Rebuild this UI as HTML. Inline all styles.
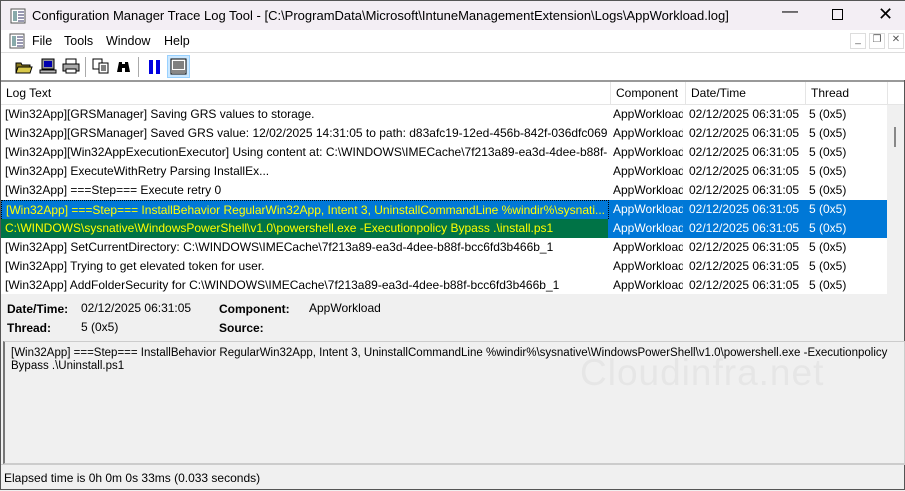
<!DOCTYPE html><html><head><style>
*{margin:0;padding:0;box-sizing:border-box}
body{width:905px;height:490px;overflow:hidden;background:#f0f0f0;font-family:"Liberation Sans",sans-serif;font-size:12px;color:#000;position:relative;border:1px solid #555}
.abs{position:absolute}
.title{left:0;top:0;width:905px;height:29px;background:#f3eef4;font-size:13px}
.menu{left:0;top:29px;width:905px;height:22px;background:#fff;font-size:12.5px}
.tb{left:0;top:51px;width:905px;height:28px;background:#fff;border-top:1px solid #ddd}
.list{left:0;top:79px;width:903px;height:214px;background:#fff;border-top:2px solid #999}
.hdr{height:23px;border-bottom:1px solid #e5e5e5;position:relative}
.hdr div{position:absolute;height:22px;border-right:1px solid #e5e5e5;padding-left:5px;top:0;line-height:22px}
.row{height:19px;line-height:19px;position:relative;white-space:nowrap}
.row span{position:absolute;top:0;overflow:hidden}
.c1{left:4px;width:602px}.c2{left:612px;width:70px}.c3{left:688px;width:115px}.c4{left:808px}
.sel{background:#0078d7;color:#fff}
.b{font-weight:bold}
</style></head><body>
<div class="abs title">
<svg class="abs" style="left:9px;top:7px" width="16" height="16"><rect x="1" y="1" width="14" height="14" fill="#fff" stroke="#555"/><rect x="3" y="3" width="4" height="10" fill="#8aa"/><path d="M8 4h6M8 7h6M8 10h6M8 13h6" stroke="#336"/></svg>
<div class="abs" style="left:31px;top:7px">Configuration Manager Trace Log Tool - [C:\ProgramData\Microsoft\IntuneManagementExtension\Logs\AppWorkload.log]</div>
<div class="abs" style="left:781px;top:2px;font-size:16px">—</div>
<div class="abs" style="left:831px;top:8px;width:11px;height:11px;border:1px solid #000"></div>
<div class="abs" style="left:877px;top:3px;font-size:18px">✕</div>
</div>
<div class="abs menu">
<svg class="abs" style="left:8px;top:3px" width="16" height="16"><rect x="1" y="1" width="14" height="14" fill="#fff" stroke="#555"/><rect x="3" y="3" width="4" height="10" fill="#8aa"/><path d="M8 4h6M8 7h6M8 10h6M8 13h6" stroke="#336"/></svg>
<div class="abs" style="left:31px;top:4px">File</div><div class="abs" style="left:63px;top:4px">Tools</div><div class="abs" style="left:105px;top:4px">Window</div><div class="abs" style="left:163px;top:4px">Help</div>
<div class="abs" style="left:849px;top:3px;width:16px;height:16px;border:1px solid #ddd;font-size:10px;text-align:center;color:#555">_</div>
<div class="abs" style="left:868px;top:3px;width:16px;height:16px;border:1px solid #ddd;font-size:10px;text-align:center;color:#555">❐</div>
<div class="abs" style="left:887px;top:3px;width:16px;height:16px;border:1px solid #ddd;font-size:10px;text-align:center;color:#555">✕</div>
</div>
<div class="abs tb">
<svg class="abs" style="left:14px;top:5px" width="18" height="16"><path d="M1 5h5l1 2h8v8H1z" fill="#8a7a20" stroke="#000"/><path d="M3 9h14l-2 6H1z" fill="#d8c84a" stroke="#000"/></svg>
<svg class="abs" style="left:38px;top:5px" width="18" height="16"><rect x="3" y="1" width="12" height="10" fill="#999" stroke="#000"/><rect x="5" y="3" width="8" height="6" fill="#0000b0"/><rect x="1" y="12" width="16" height="3" fill="#bbb" stroke="#000"/></svg>
<svg class="abs" style="left:61px;top:5px" width="18" height="16"><rect x="4" y="1" width="10" height="5" fill="#fff" stroke="#000"/><rect x="1" y="6" width="16" height="7" fill="#aaa" stroke="#000"/><rect x="4" y="11" width="10" height="4" fill="#fff" stroke="#000"/></svg>
<div class="abs" style="left:84px;top:4px;width:1px;height:20px;background:#aaa"></div>
<svg class="abs" style="left:91px;top:5px" width="18" height="16"><rect x="1" y="1" width="9" height="10" fill="#fff" stroke="#000"/><rect x="7" y="5" width="9" height="10" fill="#fff" stroke="#000"/><path d="M9 8h5M9 10h5M9 12h5" stroke="#000"/></svg>
<svg class="abs" style="left:114px;top:5px" width="18" height="16"><path d="M2 14l2-10h3v10zM10 14V4h3l2 10z" fill="#000"/><rect x="6" y="6" width="5" height="4" fill="#000"/></svg>
<div class="abs" style="left:137px;top:4px;width:1px;height:20px;background:#aaa"></div>
<div class="abs" style="left:148px;top:7px;width:4px;height:14px;background:#0000e0"></div><div class="abs" style="left:155px;top:7px;width:4px;height:14px;background:#0000e0"></div>
<div class="abs" style="left:166px;top:2px;width:23px;height:23px;background:#cce8ff;border:1px solid #99d1ff"></div>
<svg class="abs" style="left:169px;top:5px" width="17" height="17"><rect x="1" y="1" width="15" height="15" fill="#fff" stroke="#000"/><path d="M3 4h11M3 6h11M3 8h11M3 10h11" stroke="#000"/><rect x="2" y="12" width="13" height="3" fill="#888"/></svg>
</div>
<div class="abs list">
<div class="hdr"><div style="left:0;width:610px">Log Text</div><div style="left:610px;width:75px">Component</div><div style="left:685px;width:120px">Date/Time</div><div style="left:805px;width:82px">Thread</div></div>
<div class="row"><span class="c1">[Win32App][GRSManager] Saving GRS values to storage.</span><span class="c2">AppWorkload</span><span class="c3">02/12/2025 06:31:05</span><span class="c4">5 (0x5)</span></div>
<div class="row"><span class="c1">[Win32App][GRSManager] Saved GRS value: 12/02/2025 14:31:05 to path: d83afc19-12ed-456b-842f-036dfc06924...</span><span class="c2">AppWorkload</span><span class="c3">02/12/2025 06:31:05</span><span class="c4">5 (0x5)</span></div>
<div class="row"><span class="c1">[Win32App][Win32AppExecutionExecutor] Using content at: C:\WINDOWS\IMECache\7f213a89-ea3d-4dee-b88f-...</span><span class="c2">AppWorkload</span><span class="c3">02/12/2025 06:31:05</span><span class="c4">5 (0x5)</span></div>
<div class="row"><span class="c1">[Win32App] ExecuteWithRetry Parsing InstallEx...</span><span class="c2">AppWorkload</span><span class="c3">02/12/2025 06:31:05</span><span class="c4">5 (0x5)</span></div>
<div class="row"><span class="c1">[Win32App] ===Step=== Execute retry 0</span><span class="c2">AppWorkload</span><span class="c3">02/12/2025 06:31:05</span><span class="c4">5 (0x5)</span></div>
<div class="row sel"><span class="c1" style="left:0;width:608px;padding-left:4px;background:#0078d7;color:#ff0;border:1px dotted #000">[Win32App] ===Step=== InstallBehavior RegularWin32App, Intent 3, UninstallCommandLine %windir%\sysnati...</span><span class="c2">AppWorkload</span><span class="c3">02/12/2025 06:31:05</span><span class="c4">5 (0x5)</span></div>
<div class="row sel"><span class="c1" style="left:0;width:607px;padding-left:4px;background:#007346;color:#ff0">C:\WINDOWS\sysnative\WindowsPowerShell\v1.0\powershell.exe -Executionpolicy Bypass .\install.ps1</span><span class="c2">AppWorkload</span><span class="c3">02/12/2025 06:31:05</span><span class="c4">5 (0x5)</span></div>
<div class="row"><span class="c1">[Win32App] SetCurrentDirectory: C:\WINDOWS\IMECache\7f213a89-ea3d-4dee-b88f-bcc6fd3b466b_1</span><span class="c2">AppWorkload</span><span class="c3">02/12/2025 06:31:05</span><span class="c4">5 (0x5)</span></div>
<div class="row"><span class="c1">[Win32App] Trying to get elevated token for user.</span><span class="c2">AppWorkload</span><span class="c3">02/12/2025 06:31:05</span><span class="c4">5 (0x5)</span></div>
<div class="row"><span class="c1">[Win32App] AddFolderSecurity for C:\WINDOWS\IMECache\7f213a89-ea3d-4dee-b88f-bcc6fd3b466b_1</span><span class="c2">AppWorkload</span><span class="c3">02/12/2025 06:31:05</span><span class="c4">5 (0x5)</span></div>
<div class="abs" style="left:886px;top:23px;width:17px;height:190px;background:#f0f0f0"></div>
<div class="abs" style="left:893px;top:45px;width:2px;height:20px;background:#888"></div>
</div>
<div class="abs b" style="left:6px;top:301px">Date/Time:</div><div class="abs" style="left:80px;top:300px">02/12/2025 06:31:05</div>
<div class="abs b" style="left:218px;top:301px">Component:</div><div class="abs" style="left:308px;top:300px">AppWorkload</div>
<div class="abs b" style="left:6px;top:320px">Thread:</div><div class="abs" style="left:80px;top:319px">5 (0x5)</div>
<div class="abs b" style="left:218px;top:320px">Source:</div>
<div class="abs" style="left:2px;top:340px;width:902px;height:123px;background:#f0f0f0;border:1px solid #ccc;border-left:2px solid #777;padding:5px 6px;font-size:11.5px;line-height:13px">[Win32App] ===Step=== InstallBehavior RegularWin32App, Intent 3, UninstallCommandLine %windir%\sysnative\WindowsPowerShell\v1.0\powershell.exe -Executionpolicy Bypass .\Uninstall.ps1
<div class="abs" style="left:575px;top:24px;font-size:37px;color:#e6e6e6;letter-spacing:1px">Cloudinfra.net</div></div>
<div class="abs" style="left:0;top:463px;width:905px;height:27px;border-top:1px solid #ccc;padding:6px 3px">Elapsed time is 0h 0m 0s 33ms (0.033 seconds)</div>
</body></html>
